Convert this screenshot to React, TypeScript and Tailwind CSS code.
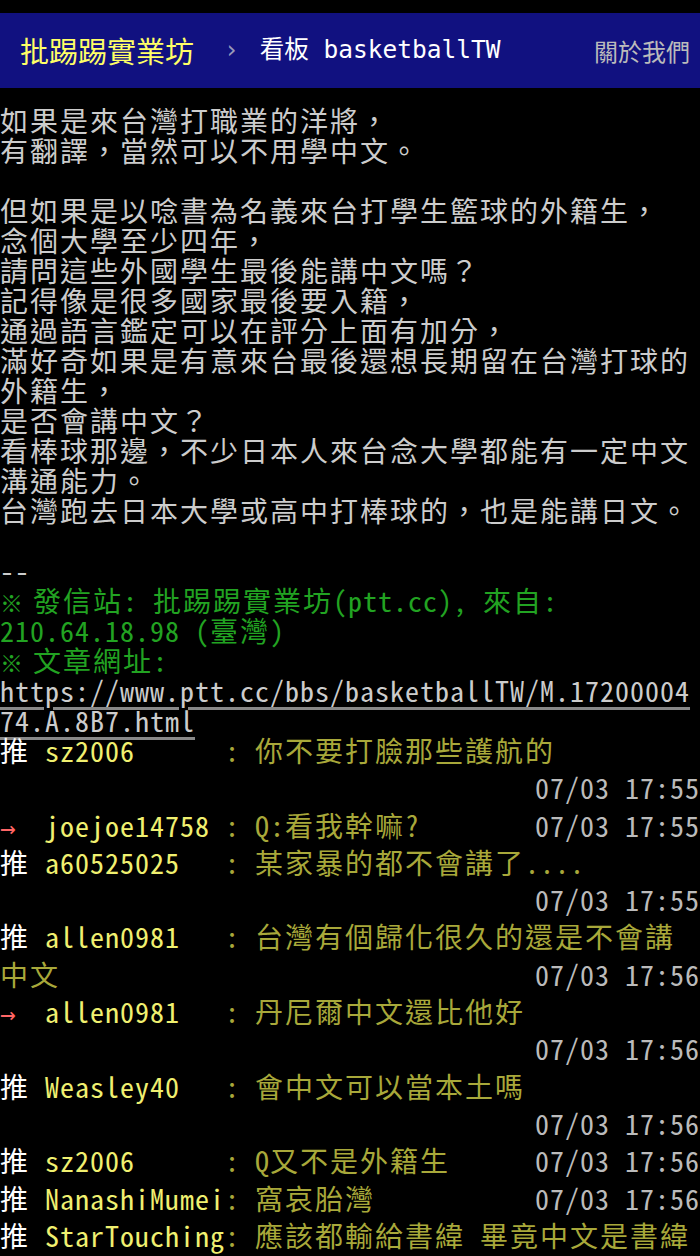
import React from "react";

function isWide(ch: string) {
  const c = ch.codePointAt(0) ?? 0;
  return (
    (c >= 0x2e80 && c <= 0x9fff) ||
    (c >= 0xf900 && c <= 0xfaff) ||
    (c >= 0xfe30 && c <= 0xfe4f) ||
    (c >= 0xff00 && c <= 0xff60)
  );
}

function T({ s }: { s: string }) {
  const runs: { w: boolean; t: string }[] = [];
  for (const ch of Array.from(s)) {
    const w = isWide(ch);
    const last = runs[runs.length - 1];
    if (last && last.w === w) last.t += ch;
    else runs.push({ w, t: ch });
  }
  return (
    <>
      {runs.map((r, i) =>
        r.w ? (
          <span key={i} className="tracking-[2px]">
            {r.t}
          </span>
        ) : (
          <span key={i} className="tracking-[1px]">
            {r.t}
          </span>
        )
      )}
    </>
  );
}

function Ref() {
  return <span className="inline-block w-[18px] text-[23px] leading-[10px]">※</span>;
}

const bodyLines = [
  "如果是來台灣打職業的洋將，",
  "有翻譯，當然可以不用學中文。",
  "",
  "但如果是以唸書為名義來台打學生籃球的外籍生，",
  "念個大學至少四年，",
  "請問這些外國學生最後能講中文嗎？",
  "記得像是很多國家最後要入籍，",
  "通過語言鑑定可以在評分上面有加分，",
  "滿好奇如果是有意來台最後還想長期留在台灣打球的",
  "外籍生，",
  "是否會講中文？",
  "看棒球那邊，不少日本人來台念大學都能有一定中文",
  "溝通能力。",
  "台灣跑去日本大學或高中打棒球的，也是能講日文。",
  "",
  "--",
];

type Push = {
  tag: "推" | "→";
  user: string;
  content: string;
  ts: string;
  layout: "inline" | "wrap" | "split";
  cont?: string;
};

const pushes: Push[] = [
  { tag: "推", user: "sz2006", content: "你不要打臉那些護航的", ts: "07/03 17:55", layout: "wrap" },
  { tag: "→", user: "joejoe14758", content: "Q:看我幹嘛?", ts: "07/03 17:55", layout: "inline" },
  { tag: "推", user: "a60525025", content: "某家暴的都不會講了....", ts: "07/03 17:55", layout: "wrap" },
  { tag: "推", user: "allen0981", content: "台灣有個歸化很久的還是不會講", cont: "中文", ts: "07/03 17:56", layout: "split" },
  { tag: "→", user: "allen0981", content: "丹尼爾中文還比他好", ts: "07/03 17:56", layout: "wrap" },
  { tag: "推", user: "Weasley40", content: "會中文可以當本土嗎", ts: "07/03 17:56", layout: "wrap" },
  { tag: "推", user: "sz2006", content: "Q又不是外籍生", ts: "07/03 17:56", layout: "inline" },
  { tag: "推", user: "NanashiMumei", content: "窩哀胎灣", ts: "07/03 17:56", layout: "inline" },
  { tag: "推", user: "StarTouching", content: "應該都輸給書緯 畢竟中文是書緯", ts: "07/03 17:57", layout: "wrap" },
];

function PushRow({ p }: { p: Push }) {
  const head = (
    <div className="whitespace-pre h-[37.3px]">
      {p.tag === "推" ? (
        <span className="inline-block w-[45px] text-white">推</span>
      ) : (
        <span className="inline-block w-[45px] font-['DejaVu_Sans_Mono',monospace] text-[26px] leading-[10px] text-[#ff6666]">
          →
        </span>
      )}
      <span className="inline-block min-w-[180px] text-[#f0f070]">
        <T s={p.user} />
      </span>
      <span className="text-[#a8a83a]">
        <T s={": " + p.content} />
      </span>
    </div>
  );
  const ts = (
    <span className="text-[#bbbbbb] whitespace-pre">
      <T s={p.ts} />
    </span>
  );
  if (p.layout === "inline") {
    return (
      <div className="flex justify-between h-[37.3px]">
        {head}
        {ts}
      </div>
    );
  }
  if (p.layout === "split") {
    return (
      <div>
        {head}
        <div className="flex justify-between h-[37.3px]">
          <span className="text-[#a8a83a]">
            <T s={p.cont ?? ""} />
          </span>
          {ts}
        </div>
      </div>
    );
  }
  return (
    <div>
      {head}
      <div className="text-right h-[37.3px]">{ts}</div>
    </div>
  );
}

export default function App() {
  return (
    <div className="w-[700px] min-h-screen bg-black pt-[13px] overflow-hidden">
      <header className="h-[75px] bg-[#111180] flex items-center pl-[20px] pr-[10px]">
        <span className="font-['Noto_Sans_CJK_TC',sans-serif] text-[29px] leading-none text-[#ffff66]">批踢踢實業坊</span>
        <span className="ml-[30px] font-['DejaVu_Sans_Mono',monospace] text-[24.5px] leading-none text-[#9999bb]">›</span>
        <span className="ml-[21px] whitespace-pre font-['DejaVu_Sans_Mono','Noto_Sans_CJK_TC',monospace] text-[24.5px] leading-none text-white">
          看板 basketballTW
        </span>
        <span className="ml-auto font-['Noto_Sans_CJK_TC',sans-serif] text-[24px] leading-none text-[#bbbbbb]">關於我們</span>
      </header>

      <main className="pt-[17px] font-['Noto_Sans_Mono_CJK_TC','Noto_Sans_CJK_TC',monospace] text-[28px] leading-[30px]">
        <div className="text-[#cccccc]">
          {bodyLines.map((l, i) => (
            <div key={i} className="whitespace-pre h-[30px]">
              <T s={l} />
            </div>
          ))}
        </div>
        <div className="text-[#22a322]">
          <div className="whitespace-pre h-[30px]">
            <Ref />
            <T s=" 發信站: 批踢踢實業坊(ptt.cc), 來自:" />
          </div>
          <div className="whitespace-pre h-[30px]">
            <T s="210.64.18.98 (臺灣)" />
          </div>
          <div className="whitespace-pre h-[30px]">
            <Ref />
            <T s=" 文章網址:" />
          </div>
        </div>
        <div className="text-[#cccccc]">
          <div className="whitespace-pre h-[30px]">
            <span className="underline decoration-[#888888] decoration-[3px] underline-offset-[5px]">
              <T s="https://www.ptt.cc/bbs/basketballTW/M.17200004" />
            </span>
          </div>
          <div className="whitespace-pre h-[30px]">
            <span className="underline decoration-[#888888] decoration-[3px] underline-offset-[5px]">
              <T s="74.A.8B7.html" />
            </span>
          </div>
        </div>
        <div className="-mt-[3px] leading-[37.3px]">
          {pushes.map((p, i) => (
            <PushRow key={i} p={p} />
          ))}
        </div>
      </main>
    </div>
  );
}
